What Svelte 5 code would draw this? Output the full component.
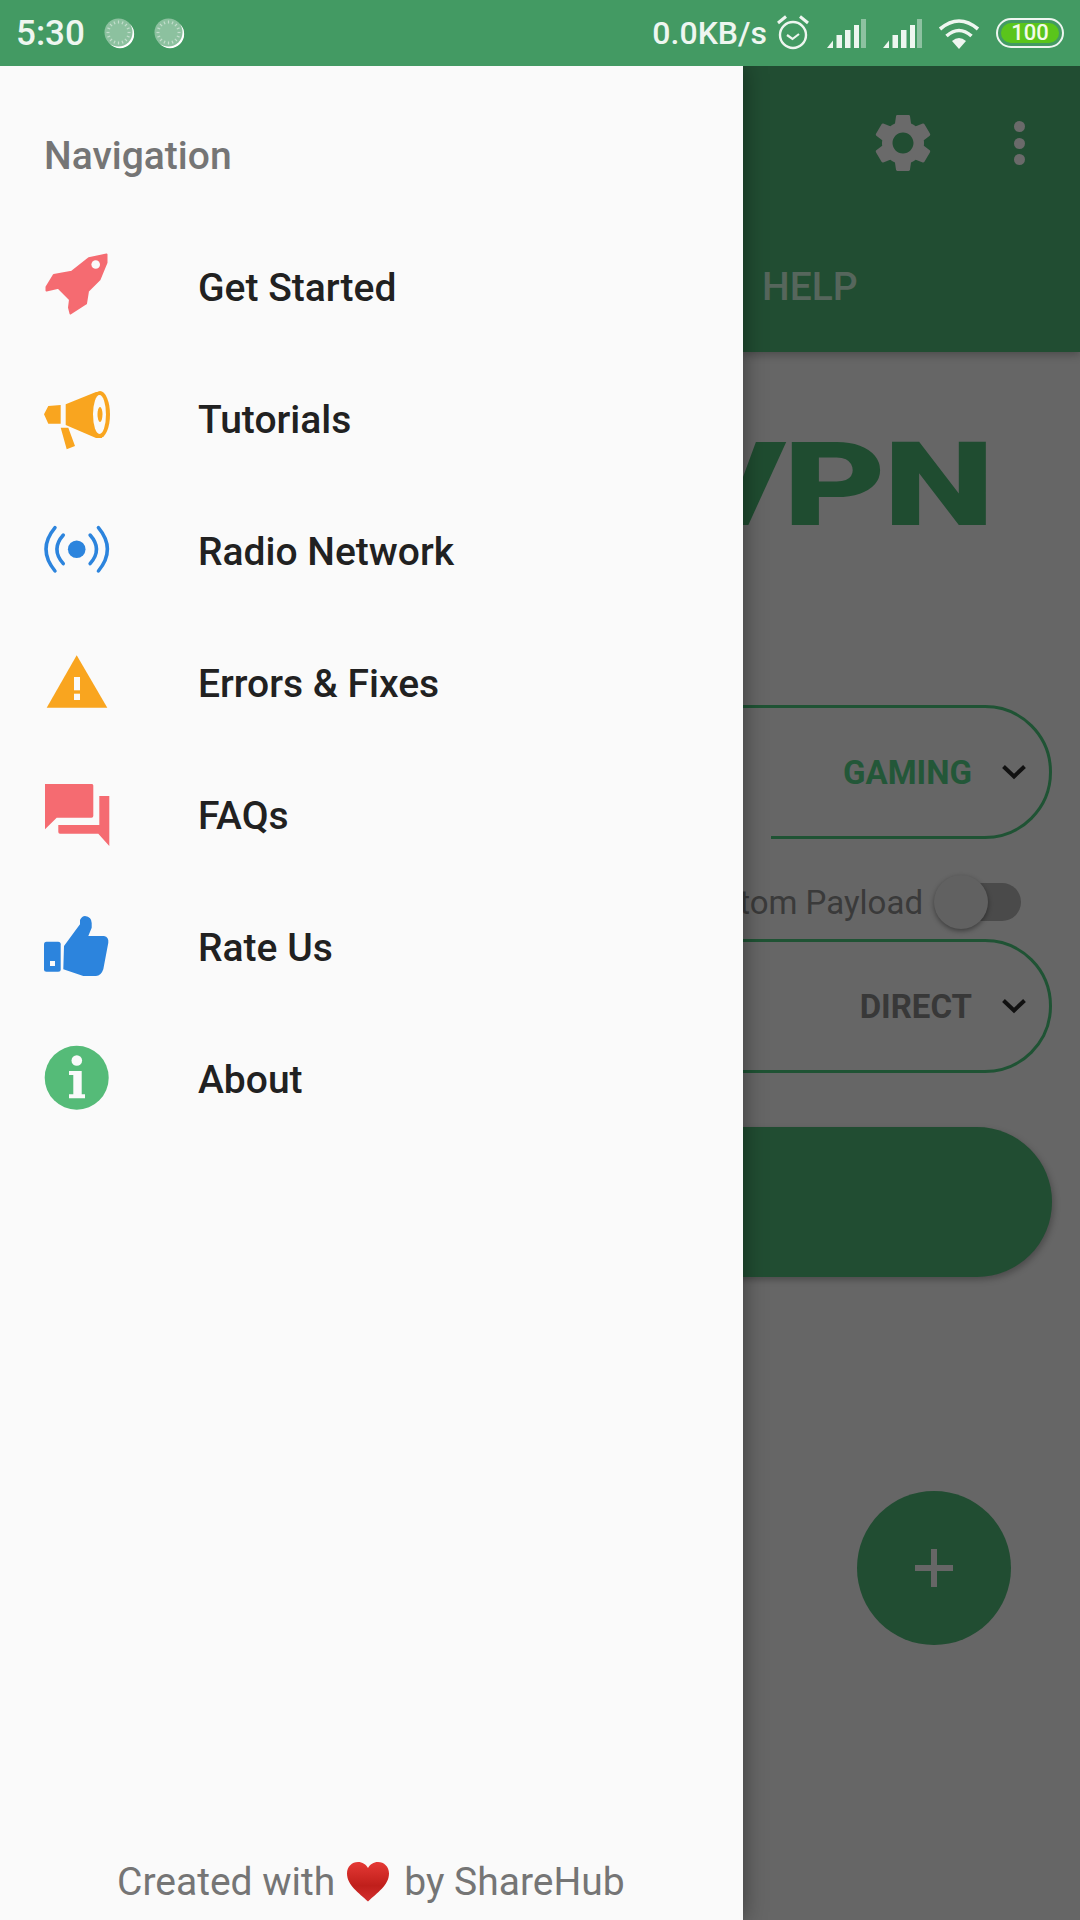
<script>
  const items = [
    { key: 'rocket', label: 'Get Started' },
    { key: 'horn', label: 'Tutorials' },
    { key: 'radio', label: 'Radio Network' },
    { key: 'warn', label: 'Errors & Fixes' },
    { key: 'chat', label: 'FAQs' },
    { key: 'thumb', label: 'Rate Us' },
    { key: 'info', label: 'About' }
  ];
  const ticks = Array.from({ length: 16 }, (_, i) => i * 22.5);
</script>

{#snippet spinner()}
  <svg class="spin" width="32" height="32" viewBox="0 0 32 32">
    <circle cx="15.800" cy="15.800" r="14" fill="#c9e2d2" />
    <path d="M26 6 A13.800 13.800 0 0 1 6 26 A14.500 14.500 0 0 0 26 6 Z" fill="#fff" />
    <circle cx="14.500" cy="14.500" r="14" fill="#8cc19f" />
    {#each ticks as t}
      <line x1="14.500" y1="2.500" x2="14.500" y2="5.500" stroke="#c3ddcc" stroke-width="1.200" transform="rotate({t} 14.500 14.500)" />
    {/each}
  </svg>
{/snippet}

{#snippet signal()}
  <svg width="40" height="30" viewBox="0 0 40 30">
    <path d="M1 29 L7 21.500 V29 Z" fill="#eef6f0" />
    <rect x="10.500" y="16" width="5.500" height="13" fill="#eef6f0" />
    <rect x="19" y="11" width="5.500" height="18" fill="#eef6f0" />
    <rect x="28" y="6" width="5" height="23" fill="#eef6f0" />
    <rect x="35" y="0" width="5" height="29" fill="#8dc2a1" />
  </svg>
{/snippet}

{#snippet chevron()}
  <svg class="chev" width="26" height="18" viewBox="0 0 26 18">
    <path d="M2.500 3.500 L13 13.500 L23.500 3.500" fill="none" stroke="#111" stroke-width="4" />
  </svg>
{/snippet}

<div class="phone">
  <header class="status">
    <div class="status-left">
      <span class="time">5:30</span>
      {@render spinner()}
      {@render spinner()}
    </div>
    <div class="status-right">
      <span class="speed">0.0KB/s</span>
      <svg class="alarm" width="34" height="36" viewBox="0 0 34 36">
        <circle cx="17" cy="21" r="13" fill="none" stroke="#eef6f0" stroke-width="2.400" />
        <path d="M11 21 L16.500 25 L23 20" fill="none" stroke="#eef6f0" stroke-width="2.200" />
        <path d="M2 9 L10 2.500 M32 9 L24 2.500" stroke="#eef6f0" stroke-width="3" />
      </svg>
      <span class="sig">{@render signal()}</span>
      <span class="sig two">{@render signal()}</span>
      <svg class="wifi" width="42" height="32" viewBox="0 0 42 32">
        <path d="M2 11 Q21 -5 40 11 M8.500 18 Q21 7 33.500 18" fill="none" stroke="#eef6f0" stroke-width="3.600" />
        <path d="M14 23 Q21 17 28 23 L21 31 Z" fill="#eef6f0" />
      </svg>
      <div class="battery"><span>100</span></div>
    </div>
  </header>

  <div class="stage">
    <aside class="drawer">
      <h2 class="nav-title">Navigation</h2>
      <nav class="menu">
        {#each items as item}
          <div class="row">
            <svg class="icon" width="66" height="66" viewBox="0 0 66 66">
              {#if item.key === 'rocket'}
                <path d="M62.500 -.5 V7.500 L55.500 24.500 L44 36 L42 48.500 L26.500 58.500 L25 52.500 L26 44.500 L14.300 32.800 L2.500 35.500 V32 L9.800 20 L27.700 16.700 L44.800 3.300 Z" fill="#f56b71" stroke="#f56b71" stroke-width="2" stroke-linejoin="round" />
                <circle cx="51.700" cy="9.500" r="4.300" fill="#fafafa" />
              {:else if item.key === 'horn'}
                <path d="M21.700 17.300 L52 5 H58 V51 H52 L21.700 38 Z" fill="#f9a51f" />
                <ellipse cx="56" cy="27.500" rx="10" ry="23.500" fill="#f9a51f" />
                <ellipse cx="55.500" cy="27.500" rx="6.500" ry="19.500" fill="#fafafa" />
                <ellipse cx="56" cy="27.500" rx="2.500" ry="7.500" fill="#f9a51f" />
                <path d="M0 27.300 L4.300 19 L16.700 18 V36.700 L4.300 36.700 Z M16.700 40.700 H24.300 L31 59 L22.700 62.300 Z" fill="#f9a51f" />
              {:else if item.key === 'radio'}
                <circle cx="32.700" cy="30.300" r="8.800" fill="#2c84dd" />
                <path d="M19.300 16 Q6.500 30.300 19.300 44.700 M46.100 16 Q58.900 30.300 46.100 44.700 M11 8.700 Q-7 30.300 11 52 M54.400 8.700 Q72.400 30.300 54.400 52" fill="none" stroke="#2c84dd" stroke-width="3.500" stroke-linecap="round" />
              {:else if item.key === 'warn'}
                <path d="M32.700 4.300 L63.300 56.700 H2.700 Z" fill="#f9a51f" />
                <rect x="30" y="26" width="6" height="13.300" fill="#fafafa" />
                <rect x="30" y="42.700" width="6" height="6.300" fill="#fafafa" />
              {:else if item.key === 'chat'}
                <path d="M1 1 H48 Q49.300 1 49.300 2.500 V33 Q49.300 34.700 47.500 34.700 H12.700 L1 46.300 Z M55.300 13 H65.300 V63 L54.300 50.700 H16 Q14.300 50.700 14.300 49 V42 H55.300 Z" fill="#f56b71" />
              {:else if item.key === 'thumb'}
                <rect x="0" y="26.700" width="16.700" height="30" rx="2.500" fill="#2c84dd" />
                <rect x="6" y="46" width="5" height="5" fill="#fafafa" />
                <path d="M20 31 L31 16 L36 9.300 V5 Q38 1 41 1 Q47.700 2 47.700 8 V12.700 L44.300 21 H60 Q65 22 64.300 27.700 L59.300 54.300 Q57 61 52 61 H39.300 L19.300 54.300 Z" fill="#2c84dd" />
              {:else}
                <circle cx="32.700" cy="30.700" r="32" fill="#55bb78" />
                <circle cx="32.800" cy="13.500" r="5.300" fill="#fafafa" />
                <path d="M25 24 H37.700 V47.300 H41 V51.300 H25 V47.300 H29.300 V28 H25 Z" fill="#fafafa" />
              {/if}
            </svg>
            <span class="label">{item.label}</span>
          </div>
        {/each}
      </nav>
      <footer class="credit">
        <span>Created with</span>
        <svg width="42" height="40" viewBox="0 0 42 40">
          <defs>
            <linearGradient id="heart" x1="0" y1="0" x2="0" y2="1">
              <stop offset="0" stop-color="#e53935" />
              <stop offset="0.6" stop-color="#c01f1b" />
              <stop offset="1" stop-color="#d32f2f" />
            </linearGradient>
          </defs>
          <path d="M21 39.500 C12 31 0 23 0 11.500 C0 4.500 5 0 11 0 C15.500 0 19 2.500 21 6 C23 2.500 26.500 0 31 0 C37 0 42 4.500 42 11.500 C42 23 30 31 21 39.500 Z" fill="url(#heart)" />
        </svg>
        <span class="by">by ShareHub</span>
      </footer>
    </aside>

    <main class="pane">
      <div class="appbar">
        <div class="actions">
          <svg class="gear" width="70" height="70" viewBox="0 0 24 24">
            <path fill="#6a6a6a" fill-rule="evenodd" d="M19.140,12.940c0.040-0.300,0.060-0.610,0.060-0.940c0-0.320-0.020-0.640-0.070-0.940l2.030-1.580c0.180-0.140,0.230-0.410,0.120-0.610 l-1.920-3.320c-0.120-0.220-0.370-0.290-0.590-0.220l-2.390,0.960c-0.500-0.380-1.030-0.700-1.620-0.940L14.400,2.810c-0.040-0.240-0.240-0.410-0.480-0.410 h-3.840c-0.240,0-0.430,0.170-0.470,0.410L9.250,5.350C8.660,5.590,8.120,5.920,7.630,6.290L5.240,5.330c-0.220-0.080-0.470,0-0.590,0.220L2.740,8.870 C2.620,9.080,2.660,9.340,2.860,9.480l2.030,1.580C4.840,11.360,4.800,11.690,4.800,12s0.020,0.640,0.070,0.940l-2.030,1.580 c-0.180,0.140-0.230,0.410-0.120,0.610l1.920,3.320c0.120,0.220,0.370,0.290,0.590,0.220l2.390-0.960c0.500,0.380,1.030,0.700,1.620,0.940l0.360,2.540 c0.050,0.240,0.240,0.410,0.480,0.410h3.840c0.240,0,0.440-0.170,0.470-0.410l0.360-2.540c0.590-0.240,1.130-0.560,1.620-0.940l2.390,0.960 c0.220,0.080,0.470,0,0.590-0.220l1.920-3.320c0.120-0.220,0.070-0.470-0.120-0.610L19.140,12.940z M12,15.600c-1.980,0-3.600-1.620-3.600-3.600 s1.620-3.600,3.600-3.600s3.600,1.620,3.600,3.600S13.980,15.600,12,15.600z" />
          </svg>
          <div class="dots"><i></i><i></i><i></i></div>
        </div>
        <div class="tab">HELP</div>
      </div>

      <div class="body">
        <div class="logo">VPN</div>

        <div class="pill first">
          <span class="value green">GAMING</span>
          {@render chevron()}
        </div>

        <div class="payload">
          <span class="payload-text">Custom Payload</span>
          <div class="switch"><div class="thumb"></div></div>
        </div>

        <div class="pill">
          <span class="value">DIRECT</span>
          {@render chevron()}
        </div>

        <div class="connect"></div>

        <div class="fab"><span class="plus"></span></div>
      </div>
    </main>
  </div>
</div>

<style>
  :global(body) { margin: 0; background: #666; }
  .phone { width: 1080px; height: 1920px; overflow: hidden; display: flex; flex-direction: column; font-family: Roboto, "Liberation Sans", sans-serif; }

  .status { height: 66px; flex: none; background: #439a63; color: #eef6f0; display: flex; justify-content: space-between; align-items: center; position: relative; z-index: 3; }
  .status-left { display: flex; align-items: center; padding-left: 16px; }
  .time { font-size: 35px; font-weight: 500; width: 88px; }
  .spin { margin-right: 18px; margin-top: 2px; }
  .status-right { display: flex; align-items: center; padding-right: 16px; }
  .speed { font-size: 32px; font-weight: 500; }
  .alarm { margin-left: 9px; margin-top: -2px; }
  .sig { display: flex; margin-left: 16px; margin-top: 1px; }
  .wifi { margin-left: 16px; margin-top: 1px; }
  .battery { width: 68px; height: 30px; box-sizing: border-box; border: 2.500px solid #eef6f0; border-radius: 15px; margin-left: 16px; padding: 3px 3px; display: flex; }
  .battery span { flex: 1; background: #5ac51b; border-radius: 10px; color: #f2fbe9; font-size: 22px; font-weight: 500; line-height: 19px; text-align: center; }

  .stage { flex: 1; display: flex; min-height: 0; }

  .drawer { width: 743px; flex: none; background: #fafafa; position: relative; z-index: 2; box-shadow: 0 0 22px rgba(0, 0, 0, 0.42); display: flex; flex-direction: column; }
  .nav-title { margin: 0; padding: 69px 0 0 44px; font-size: 39px; line-height: 42px; font-weight: 500; color: #757575; }
  .menu { margin-top: 45px; }
  .row { height: 132px; display: flex; align-items: center; padding-left: 44px; }
  .icon { overflow: visible; flex: none; }
  .label { margin-left: 88px; font-size: 39px; font-weight: 500; color: #212121; }
  .credit { margin-top: auto; height: 76px; display: flex; align-items: center; padding-left: 117px; gap: 12px; font-size: 39px; color: #757575; }
  .by { margin-left: 3px; }

  .pane { width: 337px; flex: none; overflow: hidden; display: flex; flex-direction: column; }
  .appbar { height: 286px; flex: none; background: #214d32; box-shadow: 0 3px 8px rgba(0, 0, 0, 0.25); position: relative; z-index: 1; }
  .actions { height: 154px; display: flex; align-items: center; justify-content: flex-end; padding-right: 55px; }
  .dots { display: flex; flex-direction: column; gap: 5.500px; margin-left: 76px; }
  .dots i { width: 11px; height: 11px; border-radius: 50%; background: #6a6a6a; }
  .tab { height: 132px; line-height: 134px; padding-left: 19px; font-size: 39px; font-weight: 500; color: #56665c; }

  .body { flex: 1; background: #666; display: flex; flex-direction: column; align-items: flex-end; padding-right: 28px; }
  .logo { margin-top: 83px; margin-right: 60px; height: 100px; line-height: 100px; font-size: 117px; font-weight: 900; color: #1f4c30; transform: scaleX(1.35); transform-origin: right center; letter-spacing: -2px; }
  .pill { width: 400px; height: 134px; flex: none; box-sizing: border-box; border: 3px solid #1f5334; border-radius: 67px; display: flex; align-items: center; justify-content: flex-end; padding-right: 22px; position: relative; }
  .first { margin-top: 170px; }
  .first::after { content: ""; position: absolute; left: 0; bottom: -3px; width: 116px; height: 3px; background: #666; }
  .value { font-size: 33px; font-weight: 700; color: #383838; margin-right: 29px; }
  .green { color: #235738; }

  .payload { height: 100px; flex: none; box-sizing: border-box; padding-top: 26px; display: flex; align-items: center; margin-right: 31px; white-space: nowrap; }
  .payload-text { font-size: 33px; color: #3a3a3a; margin-right: 17px; }
  .switch { width: 81px; height: 38px; border-radius: 19px; background: #4a4a4a; position: relative; }
  .thumb { position: absolute; left: -6px; top: -8px; width: 54px; height: 54px; border-radius: 50%; background: #616161; box-shadow: 0 2px 5px rgba(0, 0, 0, 0.4); }

  .connect { width: 400px; height: 150px; flex: none; margin-top: 54px; background: #214d32; border-radius: 0 75px 75px 0; box-shadow: 2px 3px 6px rgba(0, 0, 0, 0.25); }
  .fab { width: 154px; height: 154px; flex: none; margin-top: 214px; margin-right: 41px; border-radius: 50%; background: #214d32; display: flex; align-items: center; justify-content: center; }
  .plus { width: 38px; height: 38px; background: linear-gradient(#666, #666) center / 100% 6px no-repeat, linear-gradient(#666, #666) center / 6px 100% no-repeat; }
</style>
